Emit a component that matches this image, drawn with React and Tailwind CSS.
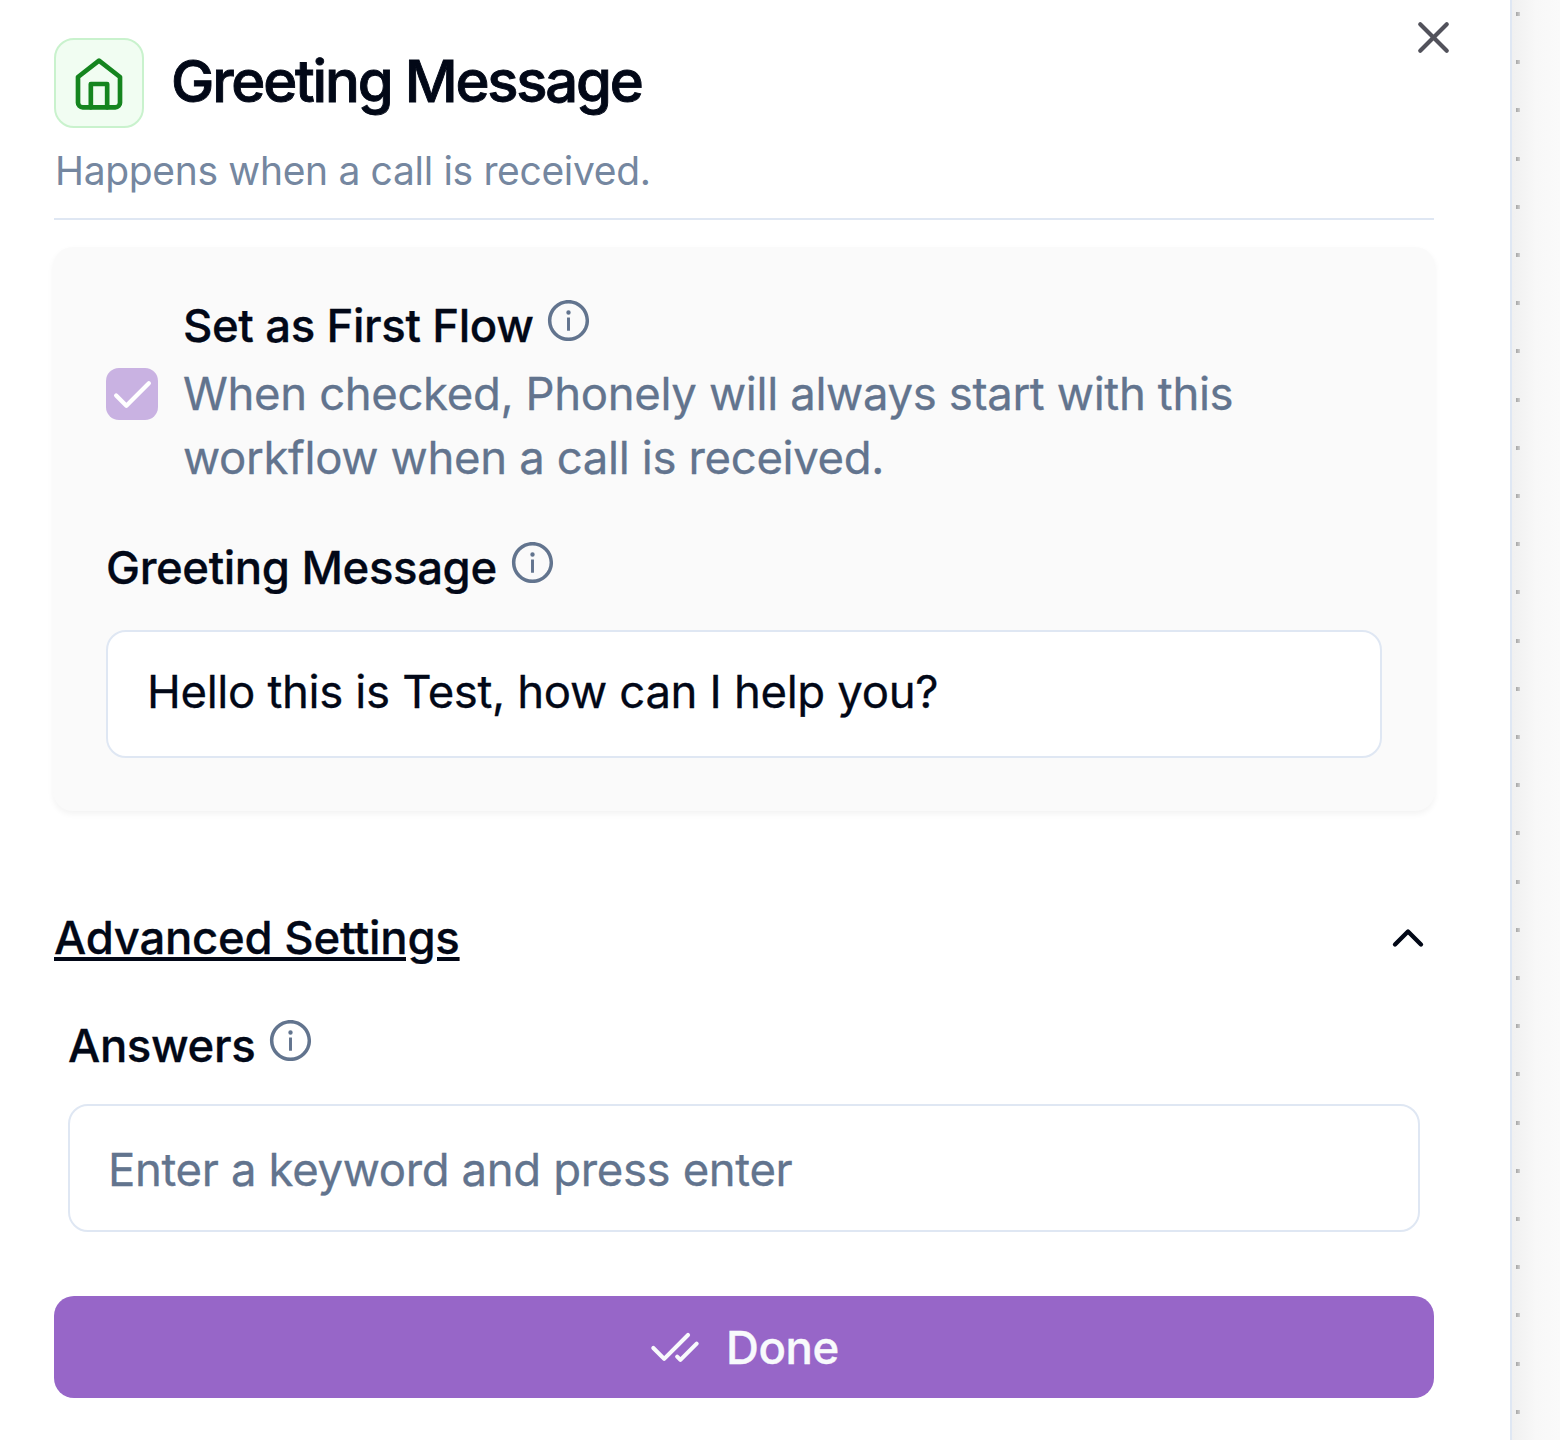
import { Check, CheckCheck, ChevronUp, X } from 'lucide-react'
import { AiOutlineInfoCircle } from 'react-icons/ai'

const dots = Array.from({ length: 30 }, (_, i) => 14 + i * 48.2)

function FieldLabel({ children }) {
  return (
    <div className="flex items-start gap-[12px] text-[45.5px] leading-[64px] font-medium tracking-[-0.38px] text-[#020817]">
      <span className="whitespace-nowrap [-webkit-text-stroke:0.3px]">{children}</span>
      <AiOutlineInfoCircle className="mt-[3px] size-[47px] text-slate-500" />
    </div>
  )
}

function HomeIcon() {
  return (
    <svg viewBox="0 0 24 24" className="mt-[2px] size-[56px]" fill="none" stroke="#15851f" strokeWidth="2" strokeLinecap="round" strokeLinejoin="round">
      <path d="m3 9 9-7 9 7v11a2 2 0 0 1-2 2H5a2 2 0 0 1-2-2z" />
      <path d="M8.5 22V12h7v10" />
    </svg>
  )
}

function Canvas() {
  return (
    <div className="relative flex-1 overflow-hidden bg-gradient-to-r from-[#f0f0f0] via-[#f8f8f8] to-[#fafafa]">
      {dots.map(y => (
        <span key={y} className="absolute left-[4px] h-[4px] w-[4px] -translate-y-1/2 bg-gradient-to-r from-[#a6a6a6] to-[#cfcfcf]" style={{ top: y }} />
      ))}
    </div>
  )
}

export default function App() {
  return (
    <div className="flex h-[1440px] w-[1560px] overflow-hidden bg-white font-['Inter',sans-serif]">
      <div className="relative w-[1512px] shrink-0 border-r-2 border-[#dfe7f3] bg-white pl-[54px] pr-[76px] pt-[38px]">
        <button className="absolute left-[1407px] top-[11px]" aria-label="Close">
          <X className="size-[53px] text-[#52525b]" strokeWidth={1.9} />
        </button>

        <div className="flex h-[90px] items-center gap-[27px]">
          <div className="flex size-[90px] items-center justify-center rounded-[20px] border-2 border-[#c9f2cd] bg-[#f1fdf2]">
            <HomeIcon />
          </div>
          <h2 className="-mt-[5px] whitespace-nowrap text-[58px] leading-[66px] font-medium tracking-[-2.2px] text-[#020817] [-webkit-text-stroke:0.9px]">Greeting Message</h2>
        </div>
        <p className="ml-[1px] mt-[17px] h-[73px] whitespace-nowrap text-[39px] leading-[52px] tracking-[-0.33px] text-[#7587a0]">Happens when a call is received.</p>
        <div className="h-[2px] bg-[#dfe7f3]" />

        <div className="-mx-[1px] mt-[27px] h-[564px] rounded-[20px] bg-[#fafafa] px-[53px] pt-[47px] shadow-[0_3px_6px_rgba(0,0,0,0.05)]">
          <div className="flex items-center gap-[25px]">
            <div className="mt-1 flex size-[52px] shrink-0 items-center justify-center rounded-[13px] bg-[#c9b2e2]">
              <Check className="mt-[3px] size-[49px] text-white" strokeWidth={2.1} />
            </div>
            <div>
              <FieldLabel>Set as First Flow</FieldLabel>
              <p className="mt-[4px] whitespace-nowrap text-[45.5px] leading-[64px] tracking-[-0.36px] text-slate-500 [-webkit-text-stroke:0.3px]">
                When checked, Phonely will always start with this<br />
                workflow when a call is received.
              </p>
            </div>
          </div>
          <div className="mt-[46px]">
            <FieldLabel>Greeting Message</FieldLabel>
          </div>
          <div className="mt-[30px] flex h-[128px] items-center rounded-[20px] border-2 border-[#dfe7f3] bg-white px-[39px] text-[45.5px] tracking-[-0.34px] text-[#020817]">
            <span className="-mt-[4px] whitespace-nowrap [-webkit-text-stroke:0.3px]">Hello this is Test, how can I help you?</span>
          </div>
        </div>

        <div className="mt-[94px] flex h-[66px] items-center justify-between">
          <h3 className="whitespace-nowrap text-[45.5px] leading-[66px] font-medium tracking-[-0.26px] text-[#020817] underline [-webkit-text-stroke:0.3px]">Advanced Settings</h3>
          <ChevronUp className="size-[52px] text-[#020817]" strokeWidth={2} />
        </div>

        <div className="mt-[43px] px-[14px]">
          <FieldLabel>Answers</FieldLabel>
          <div className="mt-[26px] flex h-[128px] items-center rounded-[20px] border-2 border-[#dfe7f3] bg-white px-[38px] text-[45.5px] tracking-[-0.36px] text-slate-500">
            <span className="mt-[4px] whitespace-nowrap [-webkit-text-stroke:0.3px]">Enter a keyword and press enter</span>
          </div>
        </div>

        <button className="mt-[64px] flex h-[102px] w-full items-center justify-center gap-[25px] rounded-[20px] bg-[#9766c8] pt-[2px] text-[45.5px] font-medium tracking-[-0.4px] text-[#f8fafc] [-webkit-text-stroke:0.4px]">
          <CheckCheck className="size-[52px]" strokeWidth={1.9} />
          Done
        </button>
      </div>
      <Canvas />
    </div>
  )
}
